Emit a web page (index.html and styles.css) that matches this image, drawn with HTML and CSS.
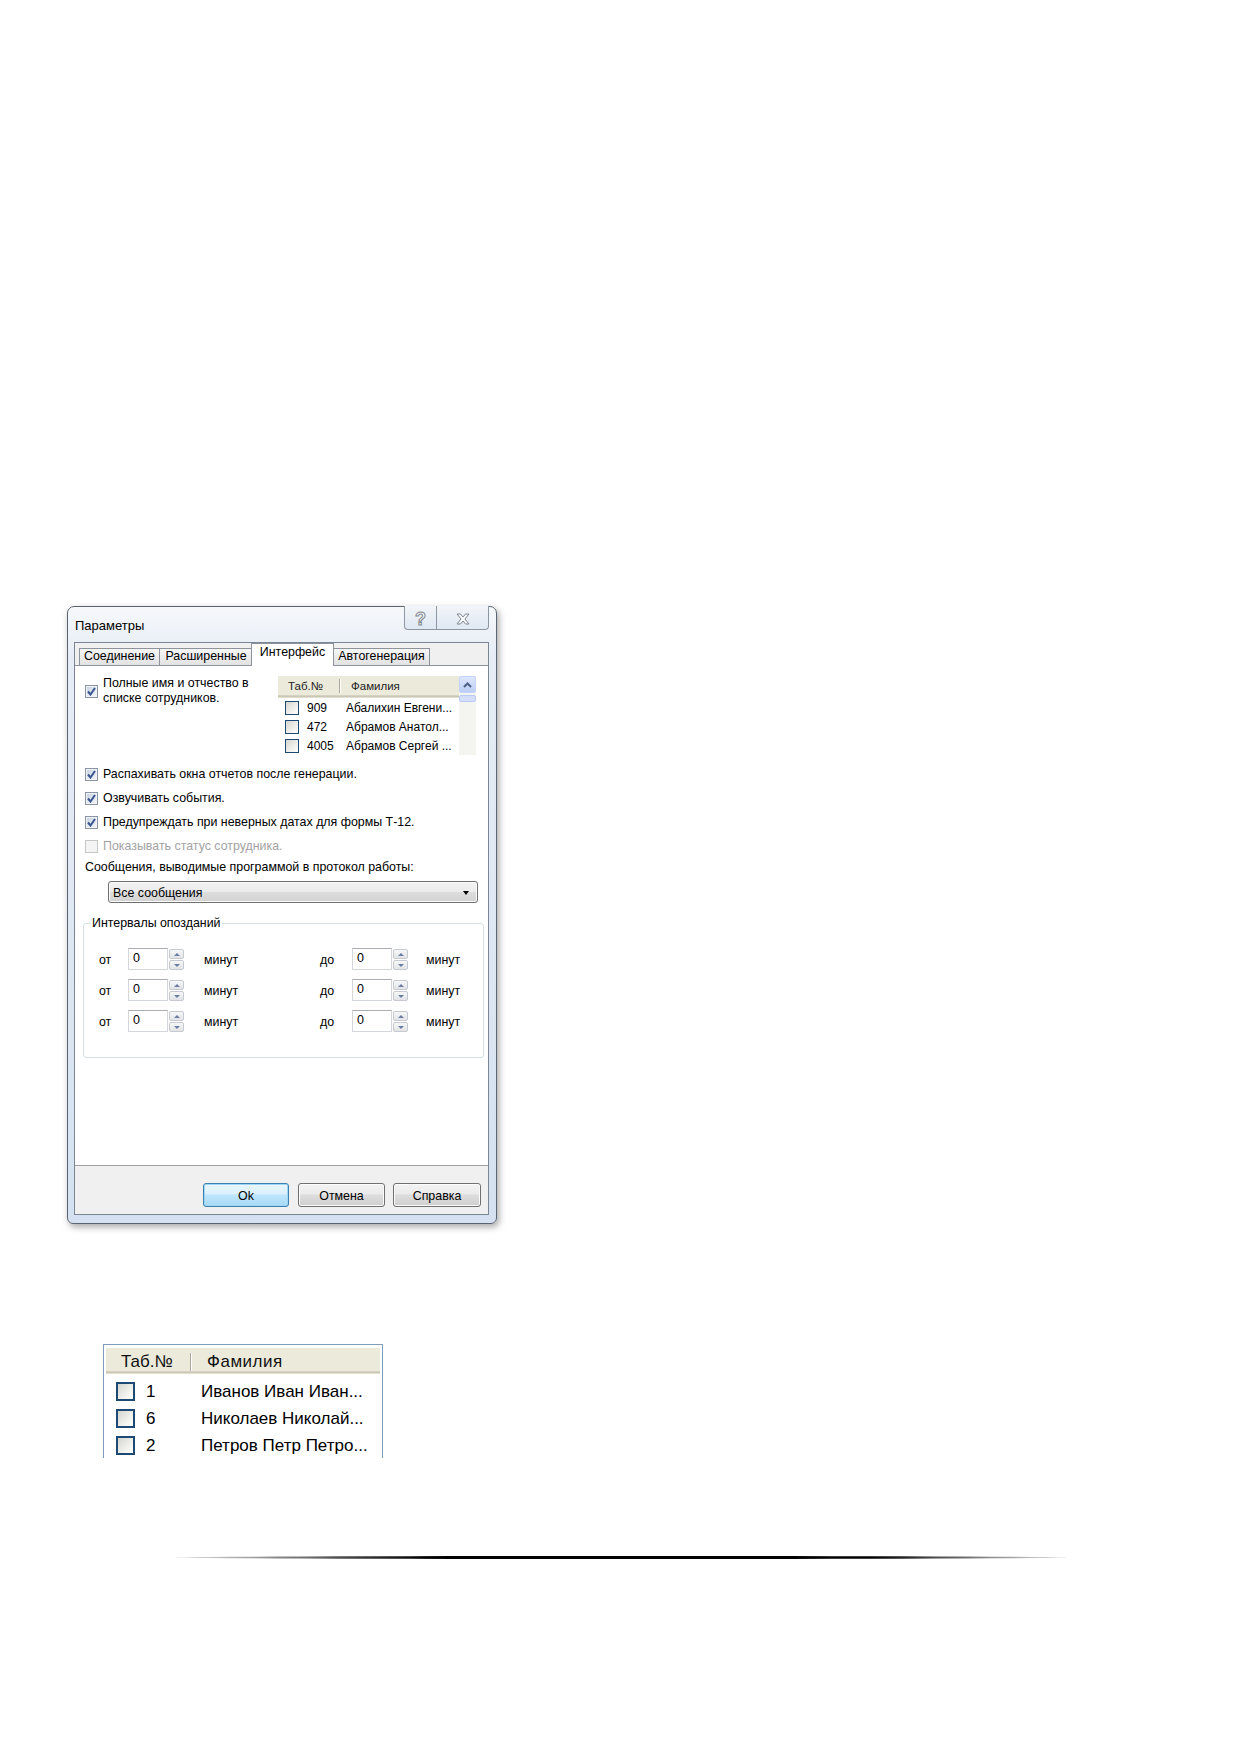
FILE: index.html
```html
<!DOCTYPE html>
<html lang="ru">
<head>
<meta charset="utf-8">
<title>Параметры</title>
<link rel="stylesheet" href="styles.css">
</head>
<body>
<div class="page">

  <div class="window">
    <div class="titlebar">
      <span class="title">Параметры</span>
      <div class="caption-buttons">
        <span class="cap-btn cap-help"><span class="help-glyph">?</span></span>
        <span class="cap-btn cap-close">
          <svg width="14" height="12" viewBox="0 0 14 12">
            <path d="M1 1 H4.5 L7 4 L9.5 1 H13 L9 6 L13 11 H9.5 L7 8 L4.5 11 H1 L5 6 Z" fill="#f7f8fa" stroke="#7f8792" stroke-width="1" stroke-linejoin="round"/>
          </svg>
        </span>
      </div>
    </div>

    <div class="client">
      <div class="tabs">
        <span class="tab tab-conn">Соединение</span>
        <span class="tab tab-ext">Расширенные</span>
        <span class="tab tab-ui active">Интерфейс</span>
        <span class="tab tab-auto">Автогенерация</span>
      </div>

      <div class="panel">
        <div class="top-row">
          <div class="check-item top-check">
            <span class="cb checked"><svg width="9" height="9" viewBox="0 0 9 9"><path d="M1 4.5 L3.5 7.5 L8 1" fill="none" stroke="#3a5590" stroke-width="2"/></svg></span>
            <span class="two-line">Полные имя и отчество в<br>списке сотрудников.</span>
          </div>

          <div class="emp-list">
            <div class="emp-body">
              <div class="lv-header">
                <span class="col-num">Таб.№</span>
                <span class="col-sep"></span>
                <span class="col-name">Фамилия</span>
              </div>
              <div class="lv-row"><span class="xp-cb"></span><span class="lv-num">909</span><span class="lv-name">Абалихин Евгени...</span></div>
              <div class="lv-row"><span class="xp-cb"></span><span class="lv-num">472</span><span class="lv-name">Абрамов Анатол...</span></div>
              <div class="lv-row"><span class="xp-cb"></span><span class="lv-num">4005</span><span class="lv-name">Абрамов Сергей ...</span></div>
            </div>
            <div class="vscroll">
              <div class="sb-up"><svg width="9" height="6" viewBox="0 0 9 6"><path d="M1 5 L4.5 1.5 L8 5" fill="none" stroke="#4d6185" stroke-width="2"/></svg></div>
              <div class="sb-thumb"></div>
            </div>
          </div>
        </div>

        <div class="options">
          <div class="check-item">
            <span class="cb checked"><svg width="9" height="9" viewBox="0 0 9 9"><path d="M1 4.5 L3.5 7.5 L8 1" fill="none" stroke="#3a5590" stroke-width="2"/></svg></span>
            <span>Распахивать окна отчетов после генерации.</span>
          </div>
          <div class="check-item">
            <span class="cb checked"><svg width="9" height="9" viewBox="0 0 9 9"><path d="M1 4.5 L3.5 7.5 L8 1" fill="none" stroke="#3a5590" stroke-width="2"/></svg></span>
            <span>Озвучивать события.</span>
          </div>
          <div class="check-item">
            <span class="cb checked"><svg width="9" height="9" viewBox="0 0 9 9"><path d="M1 4.5 L3.5 7.5 L8 1" fill="none" stroke="#3a5590" stroke-width="2"/></svg></span>
            <span>Предупреждать при неверных датах для формы Т-12.</span>
          </div>
          <div class="check-item disabled">
            <span class="cb"></span>
            <span>Показывать статус сотрудника.</span>
          </div>
        </div>

        <div class="log-label">Сообщения, выводимые программой в протокол работы:</div>
        <div class="combo"><span>Все сообщения</span><span class="combo-arrow"></span></div>

        <fieldset class="group">
          <legend>Интервалы опозданий</legend>
          <div class="interval-grid">
            <span class="lbl">от</span>
            <div class="spinbox"><span class="spin-field">0</span><span class="spin-btns"><span class="spin-btn up"></span><span class="spin-btn down"></span></span></div>
            <span></span>
            <span class="lbl">минут</span>
            <span class="lbl">до</span>
            <div class="spinbox"><span class="spin-field">0</span><span class="spin-btns"><span class="spin-btn up"></span><span class="spin-btn down"></span></span></div>
            <span></span>
            <span class="lbl">минут</span>

            <span class="lbl">от</span>
            <div class="spinbox"><span class="spin-field">0</span><span class="spin-btns"><span class="spin-btn up"></span><span class="spin-btn down"></span></span></div>
            <span></span>
            <span class="lbl">минут</span>
            <span class="lbl">до</span>
            <div class="spinbox"><span class="spin-field">0</span><span class="spin-btns"><span class="spin-btn up"></span><span class="spin-btn down"></span></span></div>
            <span></span>
            <span class="lbl">минут</span>

            <span class="lbl">от</span>
            <div class="spinbox"><span class="spin-field">0</span><span class="spin-btns"><span class="spin-btn up"></span><span class="spin-btn down"></span></span></div>
            <span></span>
            <span class="lbl">минут</span>
            <span class="lbl">до</span>
            <div class="spinbox"><span class="spin-field">0</span><span class="spin-btns"><span class="spin-btn up"></span><span class="spin-btn down"></span></span></div>
            <span></span>
            <span class="lbl">минут</span>
          </div>
        </fieldset>
      </div>

      <div class="button-bar">
        <button class="btn default">Ok</button>
        <button class="btn cancel">Отмена</button>
        <button class="btn help">Справка</button>
      </div>
    </div>
  </div>

  <div class="sample-list">
    <div class="sl-header">
      <span class="sl-col-num">Таб.№</span>
      <span class="sl-sep"></span>
      <span class="sl-col-name">Фамилия</span>
    </div>
    <div class="sl-row"><span class="xp-cb big"></span><span class="sl-num">1</span><span class="sl-name">Иванов Иван Иван...</span></div>
    <div class="sl-row"><span class="xp-cb big"></span><span class="sl-num">6</span><span class="sl-name">Николаев Николай...</span></div>
    <div class="sl-row"><span class="xp-cb big"></span><span class="sl-num">2</span><span class="sl-name">Петров Петр Петро...</span></div>
  </div>

  <div class="rule"></div>
</div>
</body>
</html>
```

FILE: styles.css
```css
* { box-sizing: border-box; }

html, body {
  margin: 0;
  background: #fff;
}

body {
  font-family: "Liberation Sans", Arial, sans-serif;
  font-size: 12.4px;
  color: #000;
}

.page {
  width: 1239px;
  padding-top: 606px;
  padding-bottom: 40px;
}

/* ---------- dialog frame ---------- */
.window {
  margin-left: 67px;
  width: 430px;
  height: 618px;
  border: 1px solid #5b6572;
  border-radius: 7px 7px 6px 6px;
  background: linear-gradient(180deg, #f6f8fb 0%, #e6edf6 8%, #d5e1f0 100%);
  box-shadow: 2px 3px 7px rgba(0, 0, 0, 0.35);
  padding: 0 7px 8px 6px;
  display: flex;
  flex-direction: column;
}

.titlebar {
  height: 35px;
  display: flex;
  justify-content: space-between;
  align-items: flex-start;
  flex: none;
}

.title {
  padding: 11px 0 0 1px;
  font-size: 13px;
  line-height: 15px;
}

.caption-buttons {
  display: flex;
  margin-top: -1px;
}

.cap-btn {
  height: 24px;
  display: flex;
  align-items: center;
  justify-content: center;
  border: 1px solid #8c96a3;
  border-top: none;
  background: linear-gradient(180deg, #f2f5f9, #e0e8f2);
}

.cap-help {
  width: 33px;
  border-bottom-left-radius: 4px;
  padding-top: 2px;
}

.cap-close {
  width: 52px;
  border-left: none;
  border-bottom-right-radius: 4px;
  padding-top: 3px;
}

.help-glyph {
  font-size: 18px;
  font-weight: bold;
  line-height: 18px;
  color: #f7f8fa;
  -webkit-text-stroke: 1px #7f8792;
}

/* ---------- client area ---------- */
.client {
  flex: 1;
  border: 1px solid #7a8595;
  background: #f0f0f0;
  display: flex;
  flex-direction: column;
}

.tabs {
  height: 22px;
  flex: none;
  display: flex;
  align-items: flex-end;
  padding-left: 4px;
}

.tab {
  height: 17px;
  padding: 0;
  border: 1px solid #8e939b;
  border-bottom: none;
  margin-right: -1px;
  background: linear-gradient(180deg, #f6f6f6, #e2e2e2);
  line-height: 15px;
  text-align: center;
  white-space: nowrap;
}

.tab-conn { width: 81px; }
.tab-ext { width: 94px; }
.tab-auto { width: 97px; }

.tab.active {
  position: relative;
  z-index: 1;
  width: 83px;
  height: 23px;
  margin: 0 -1px -1px -1px;
  background: #fff;
  line-height: 17px;
}

.panel {
  flex: 1;
  background: #fff;
  border-top: 1px solid #8e939b;
  padding: 10px 0 0 10px;
}

/* ---------- check boxes ---------- */
.check-item {
  display: flex;
  align-items: center;
  gap: 5px;
  height: 14px;
  line-height: 14px;
  white-space: nowrap;
}

.cb {
  width: 13px;
  height: 13px;
  flex: none;
  border: 1px solid #8b94a2;
  background: linear-gradient(135deg, #c5cfdc 0%, #e3e9f1 60%, #f4f6f9 100%);
  box-shadow: inset 0 0 0 1px #f1f3f6;
  display: flex;
  align-items: center;
  justify-content: center;
}

.check-item.disabled {
  color: #a3a3a3;
}

.check-item.disabled .cb {
  border-color: #c6c6c6;
  background: #f4f4f4;
  box-shadow: none;
}

.top-row {
  display: flex;
  justify-content: space-between;
  align-items: flex-start;
  height: 79px;
  margin-right: 12px;
}

.top-check {
  height: 30px;
}

.two-line {
  line-height: 15px;
}

/* ---------- employee list ---------- */
.emp-list {
  width: 198px;
  height: 79px;
  display: flex;
  overflow: hidden;
  font-size: 12px;
}

.emp-body {
  flex: 1;
  min-width: 0;
}

.lv-header {
  height: 22px;
  display: flex;
  align-items: center;
  padding-bottom: 2px;
  background: #ebeadb;
  box-shadow: inset 0 -1px #e2decd, inset 0 -2px #cbc7b8, inset 0 -3px #d6d2c2;
  font-size: 11.5px;
  color: #222;
}

.col-num {
  width: 61px;
  padding-left: 10px;
}

.col-sep {
  width: 2px;
  height: 14px;
  border-left: 1px solid #aca899;
  border-right: 1px solid #fff;
}

.col-name {
  padding-left: 10px;
}

.lv-row {
  height: 19px;
  display: flex;
  align-items: center;
  padding-left: 7px;
  white-space: nowrap;
}

.xp-cb {
  width: 14px;
  height: 14px;
  flex: none;
  border: 1px solid #1c4a75;
  background: linear-gradient(135deg, #d6d6d0 0%, #f0f0ec 60%, #fff 100%);
}

.lv-num {
  width: 47px;
  padding-left: 8px;
}

.lv-name {
  overflow: hidden;
}

.vscroll {
  width: 17px;
  flex: none;
  background: #f4f4f0;
  display: flex;
  flex-direction: column;
}

.sb-up {
  height: 17px;
  border: 1px solid #c3d3fd;
  border-radius: 2px;
  background: linear-gradient(180deg, #dde7fd, #bccdf6);
  display: flex;
  align-items: center;
  justify-content: center;
}

.sb-thumb {
  height: 7px;
  margin-top: 2px;
  border: 1px solid #b9caf3;
  border-radius: 2px;
  background: #d3defb;
}

/* ---------- options ---------- */
.options {
  margin-top: 12px;
  display: flex;
  flex-direction: column;
  gap: 10px;
}

.log-label {
  margin-top: 7px;
  line-height: 14px;
  white-space: nowrap;
}

.combo {
  margin: 7px 0 0 23px;
  width: 370px;
  height: 22px;
  border: 1px solid #707070;
  border-radius: 3px;
  background: linear-gradient(180deg, #f3f3f3 0%, #ebebeb 48%, #dddddd 52%, #d2d2d2 100%);
  box-shadow: inset 0 0 0 1px #fbfbfb;
  display: flex;
  align-items: center;
  justify-content: space-between;
  padding: 1px 8px 0 4px;
}

.combo-arrow {
  width: 0;
  height: 0;
  border-left: 3.5px solid transparent;
  border-right: 3.5px solid transparent;
  border-top: 4px solid #000;
}

/* ---------- interval group ---------- */
.group {
  margin: 13px 4px 0 -2px;
  padding: 18px 0 25px 15px;
  border: 1px solid #d5dfe5;
  border-radius: 3px;
  min-width: 0;
}

.group legend {
  margin-left: -8px;
  padding: 0 1px;
  line-height: 14px;
}

.interval-grid {
  display: grid;
  grid-template-columns: 29px 56px 20px 116px 32px 56px 18px auto;
  grid-auto-rows: 22px;
  row-gap: 9px;
  align-items: center;
}

.lbl {
  padding-top: 1px;
  white-space: nowrap;
}

.spinbox {
  display: flex;
  height: 22px;
}

.spin-field {
  width: 40px;
  height: 22px;
  border: 1px solid #d3d6da;
  border-top-color: #abadb3;
  padding: 1px 0 0 4px;
  line-height: 16px;
  font-size: 12.5px;
  background: #fff;
}

.spin-btns {
  width: 15px;
  margin-left: 1px;
  display: flex;
  flex-direction: column;
  gap: 1px;
  padding-top: 1px;
}

.spin-btn {
  height: 10px;
  border: 1px solid #c6cad0;
  border-radius: 2px;
  background: linear-gradient(180deg, #f7f7f7, #e2e4e7);
  display: flex;
  align-items: center;
  justify-content: center;
}

.spin-btn::after {
  content: "";
  width: 0;
  height: 0;
  border-left: 3px solid transparent;
  border-right: 3px solid transparent;
}

.spin-btn.up::after {
  border-bottom: 3px solid #6a7ea3;
}

.spin-btn.down::after {
  border-top: 3px solid #6a7ea3;
}

/* ---------- dialog buttons ---------- */
.button-bar {
  height: 49px;
  flex: none;
  border-top: 1px solid #a0a0a0;
  display: flex;
  justify-content: flex-end;
  align-items: flex-start;
  padding: 17px 7px 0 0;
}

.btn {
  height: 24px;
  padding: 1px 0 0;
  margin: 0;
  font-family: inherit;
  font-size: 12.4px;
  color: #000;
  border: 1px solid #707070;
  border-radius: 3px;
  background: linear-gradient(180deg, #f3f3f3 0%, #ebebeb 45%, #dddddd 50%, #cfcfcf 100%);
  box-shadow: inset 0 0 0 1px #fbfbfb;
}

.btn.default {
  width: 86px;
  border-color: #3c7fb1;
  background: linear-gradient(180deg, #eaf6fd 0%, #d9f0fc 45%, #bee6fd 50%, #a7d9f5 100%);
  box-shadow: inset 0 0 0 1px #9fd6f5;
}

.btn.cancel {
  width: 87px;
  margin-left: 9px;
}

.btn.help {
  width: 88px;
  margin-left: 8px;
}

/* ---------- enlarged list sample ---------- */
.sample-list {
  margin: 120px 0 0 103px;
  width: 280px;
  height: 114px;
  border: 1px solid #7f9db9;
  border-bottom: none;
  padding: 3px 2px 0 2px;
  overflow: hidden;
  font-size: 17px;
}

.sl-header {
  height: 26px;
  display: flex;
  align-items: center;
  padding-top: 2px;
  background: #ebeadb;
  box-shadow: inset 0 -1px #e2decd, inset 0 -2px #cbc7b8, inset 0 -3px #d6d2c2;
  color: #111;
}

.sl-col-num {
  width: 84px;
  padding-left: 15px;
}

.sl-sep {
  width: 2px;
  height: 18px;
  border-left: 1px solid #aca899;
  border-right: 1px solid #fff;
}

.sl-col-name {
  padding-left: 15px;
  letter-spacing: 0.5px;
}

.sl-row {
  height: 27px;
  display: flex;
  align-items: center;
  padding-left: 10px;
  white-space: nowrap;
}

.sample-list .sl-header + .sl-row {
  margin-top: 4px;
}

.xp-cb.big {
  width: 19px;
  height: 19px;
  border-width: 2px;
}

.sl-num {
  width: 66px;
  padding-left: 11px;
}

/* ---------- closing rule ---------- */
.rule {
  margin: 98px 0 0 175px;
  width: 892px;
  height: 3px;
  border-radius: 50%;
  background: linear-gradient(90deg, rgba(0, 0, 0, 0.1) 0%, #000 28%, #000 78%, rgba(0, 0, 0, 0.1) 100%);
}
```
